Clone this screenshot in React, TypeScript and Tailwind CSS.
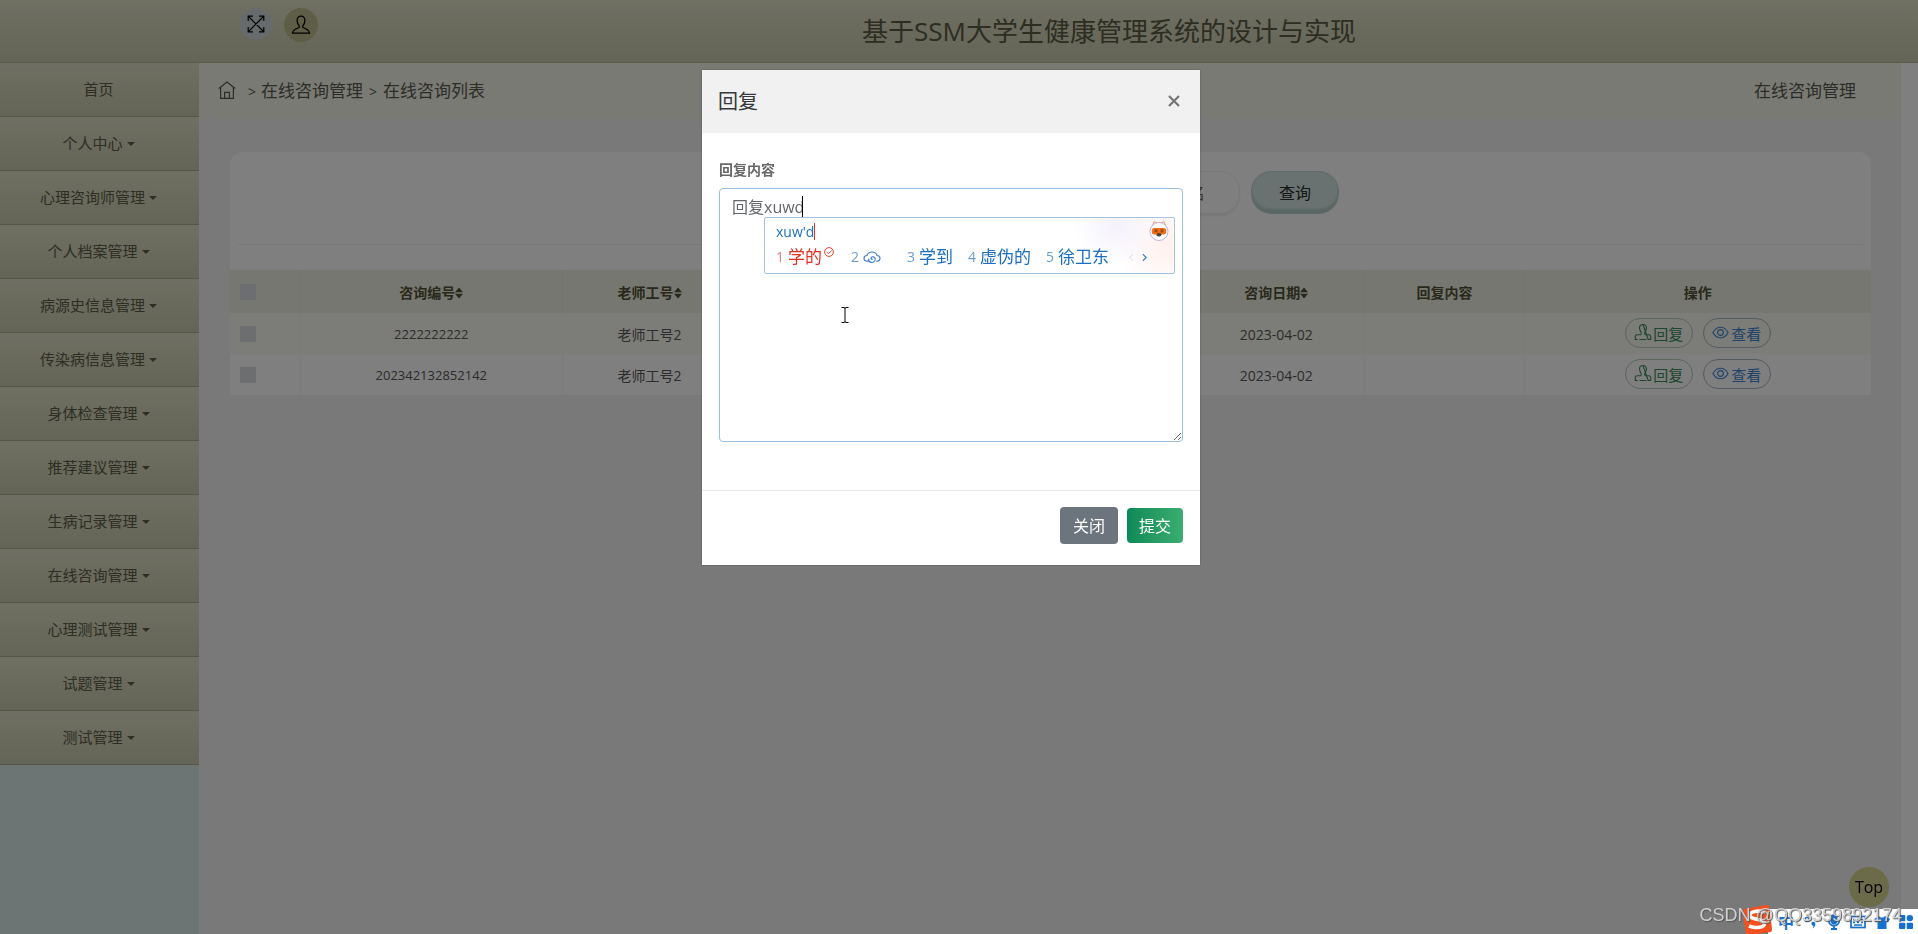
import React from "react";

const FONT = "font-['Open_Sans','Noto_Sans_CJK_SC',sans-serif]";

const MENU: { label: string; nested: boolean }[] = [
  { label: "首页", nested: false },
  { label: "个人中心", nested: true },
  { label: "心理咨询师管理", nested: true },
  { label: "个人档案管理", nested: true },
  { label: "病源史信息管理", nested: true },
  { label: "传染病信息管理", nested: true },
  { label: "身体检查管理", nested: true },
  { label: "推荐建议管理", nested: true },
  { label: "生病记录管理", nested: true },
  { label: "在线咨询管理", nested: true },
  { label: "心理测试管理", nested: true },
  { label: "试题管理", nested: true },
  { label: "测试管理", nested: true },
];

const ROWS = [
  { id: "2222222222", teacher: "老师工号2", date: "2023-04-02", shade: "bg-[#f8f8f3]" },
  { id: "202342132852142", teacher: "老师工号2", date: "2023-04-02", shade: "bg-[#fefefe]" },
];

function ExpandIcon() {
  return (
    <svg viewBox="0 0 18 18" className="size-[18px]" fill="none" stroke="#000" strokeWidth="1.2" aria-hidden="true">
      <path d="M1.5 1.5l15 15M16.5 1.5l-15 15M1.2 6V1.2H6M12 1.2h4.8V6M16.8 12v4.8H12M6 16.8H1.2V12" />
    </svg>
  );
}

function UserIcon() {
  return (
    <svg viewBox="0 0 20 20" className="size-5" fill="none" stroke="currentColor" strokeWidth="1.3" strokeLinejoin="round" aria-hidden="true">
      <path d="M10 1.2c-2.500 0-3.900 1.800-3.900 4.200 0 2.300.9 4.200 2.200 5.500.3 1-.1 1.700-1.300 2.100-2.800 1-5 2-5.600 5.200h17.200c-.6-3.200-2.800-4.200-5.600-5.200-1.200-.4-1.600-1.100-1.300-2.100 1.300-1.300 2.200-3.200 2.200-5.500 0-2.400-1.400-4.200-3.900-4.200z" />
    </svg>
  );
}

function StampIcon() {
  return (
    <svg viewBox="0 0 18 20" className="h-5 w-[18px]" fill="none" stroke="currentColor" strokeWidth="1.1" strokeLinejoin="round" aria-hidden="true">
      <path d="M9 1.500c-2.300 0-3.500 1.600-3.500 3.600 0 1.800.9 2.700 1.500 3.900.5 1 .3 2.300-.5 2.700H3.200c-1.200 0-1.900.8-1.900 1.900v2.900h2.500M14.200 16.500h2.500v-2.900c0-1.100-.7-1.900-1.900-1.900h-3.300c-.8-.4-1-1.700-.5-2.700.6-1.200 1.500-2.100 1.500-3.900 0-2-1.200-3.600-3.500-3.600zM5.500 16.500h7" />
    </svg>
  );
}

function EyeIcon() {
  return (
    <svg viewBox="0 0 18 18" className="size-[17px]" fill="none" stroke="currentColor" strokeWidth="1.2" aria-hidden="true">
      <path d="M1 9c1.800-3.500 4.600-5.600 8-5.600S15.200 5.500 17 9c-1.800 3.500-4.600 5.600-8 5.600S2.800 12.500 1 9z" />
      <circle cx="9" cy="9" r="3" />
    </svg>
  );
}

function HomeIcon() {
  return (
    <svg viewBox="0 0 18 18" className="size-[18px]" fill="none" stroke="currentColor" strokeWidth="1.2" aria-hidden="true">
      <path d="M.8 7.500L9 1l8.200 6.500M2.600 6.300v11h12.800v-11M6.600 17.300v-6h4.800v6" />
    </svg>
  );
}

function SortIcon() {
  return (
    <svg viewBox="0 0 8 12" className="h-3 w-2" fill="currentColor" aria-hidden="true">
      <path d="M4 .5L8 5.300H0zM4 11.500L0 6.700h8z" />
    </svg>
  );
}

function Header() {
  return (
    <header className="flex h-[63px] items-center border-b border-[#b4b592] bg-linear-to-b from-[#dfe0c6] to-[#c8c9ae]">
      <div className="flex w-[318px] shrink-0 justify-end gap-3 pb-3">
        <button type="button" aria-label="全屏" className="flex size-8 items-center justify-center rounded-full bg-[#d0d6da]">
          <ExpandIcon />
        </button>
        <button type="button" aria-label="个人信息" className="flex size-[34px] items-center justify-center rounded-full bg-[#bcbc8c] text-black">
          <UserIcon />
        </button>
      </div>
      <h1 className="flex-1 pr-[18px] text-center text-[26px] leading-8 text-[#5a5a42]">
        基于SSM大学生健康管理系统的设计与实现
      </h1>
    </header>
  );
}

function Sidebar() {
  return (
    <nav className="w-[199px] shrink-0 bg-[#d8eae8]">
      <ul>
        {MENU.map((item) => (
          <li key={item.label}>
            <a
              href="#"
              className="flex h-[54px] items-center justify-center gap-1 border-b border-[#a9aa88] bg-linear-to-b from-[#dfe0c6] to-[#c8c9ae] pr-[2px] text-[15px] text-[#5c5c46]"
            >
              {item.label}
              {item.nested && (
                <svg viewBox="0 0 8 4" className="h-1 w-2" fill="currentColor" aria-hidden="true">
                  <path d="M0 0h8L4 4z" />
                </svg>
              )}
            </a>
          </li>
        ))}
      </ul>
    </nav>
  );
}

function ConsultTable() {
  const head = "border-r border-[#e9e8de] pt-[2px] text-center text-[14px] font-bold";
  const cell = "border-r border-[#f4f4f0] pt-[2px] text-center";
  return (
    <table className="w-full table-fixed border-collapse text-[#585858]">
      <colgroup>
        <col className="w-[70px]" />
        <col className="w-[16%]" />
        <col className="w-[10.6%]" />
        <col className="w-[27.5%]" />
        <col className="w-[10.8%]" />
        <col className="w-[9.7%]" />
        <col />
      </colgroup>
      <thead>
        <tr className="h-[43px] bg-[#efefe4] text-[#525236]">
          <th className="border-r border-[#e9e8de] pl-[10px] text-left">
            <input type="checkbox" aria-label="全选" className="block size-4 appearance-none bg-[#dadce2]" />
          </th>
          <th className={head}><span className="inline-flex items-center">咨询编号<SortIcon /></span></th>
          <th className={head}><span className="inline-flex items-center">老师工号<SortIcon /></span></th>
          <th className={head} />
          <th className={head}><span className="inline-flex items-center">咨询日期<SortIcon /></span></th>
          <th className={head}>回复内容</th>
          <th className="pt-[2px] text-center text-[14px] font-bold">操作</th>
        </tr>
      </thead>
      <tbody>
        {ROWS.map((row) => (
          <tr key={row.id} className={`h-[41px] ${row.shade}`}>
            <td className="border-r border-[#f4f4f0] pl-[10px]">
              <input type="checkbox" aria-label={row.id} className="block size-4 appearance-none bg-[#dadce0]" />
            </td>
            <td className={`${cell} text-[13px]`}>{row.id}</td>
            <td className={`${cell} text-[14px]`}>{row.teacher}</td>
            <td className={cell} />
            <td className={`${cell} text-[14px]`}>{row.date}</td>
            <td className={cell} />
            <td>
              <div className="flex justify-center gap-[10px] pb-[2px]">
                <button type="button" className="flex h-[30px] w-[68px] items-center justify-center gap-px rounded-full border border-[#b4ccbc] text-[15px] leading-5 text-[#3a8c60]">
                  <StampIcon />
                  <span className="pt-[3px]">回复</span>
                </button>
                <button type="button" className="flex h-[30px] w-[68px] items-center justify-center gap-[2px] rounded-full border border-[#aab6c6] text-[15px] leading-5 text-[#3f86d0]">
                  <EyeIcon />
                  <span className="pt-[3px]">查看</span>
                </button>
              </div>
            </td>
          </tr>
        ))}
      </tbody>
    </table>
  );
}

function ImePanel() {
  const words = "text-[17px] text-[#1c6fc0]";
  const nums = "text-[14px] text-[#6c9ccb]";
  return (
    <div className="absolute top-[29px] left-[45px] h-[57px] w-[411px] rounded-[2px] border border-[#a5c3e0] bg-white bg-[radial-gradient(circle_at_86%_10%,#f4f1fb_0%,transparent_12%),radial-gradient(circle_at_98%_50%,#fff0ee_0%,transparent_12%)] px-[11px]">
      <div className="flex h-[26px] items-center justify-between">
        <span className="border-r border-[#e03020] text-[14px] leading-[17px] text-[#1c6fc0]">xuw'd</span>
        <svg viewBox="0 0 20 22" className="-mr-[6px] h-[22px] w-5" aria-hidden="true">
          <path d="M3.500 6l1.500-4.500 4 2h2l4-2L16.500 6" fill="#fff" stroke="#e88070" strokeWidth=".8" />
          <circle cx="10" cy="11.500" r="9" fill="#fff" stroke="#b8a0c8" strokeWidth=".8" />
          <rect x="2.800" y="8" width="14.400" height="6.500" rx="2.500" fill="#f07018" />
          <rect x="5.500" y="9.300" width="3" height="3" fill="#a04a10" />
          <rect x="11.500" y="9.300" width="3" height="3" fill="#a04a10" />
          <ellipse cx="10" cy="14.800" rx="2.600" ry="1.800" fill="#444" />
        </svg>
      </div>
      <ol className="flex items-center leading-[26px] whitespace-nowrap">
        <li className="flex w-[75px] items-center gap-1">
          <span className="text-[14px] text-[#e08078]">1</span>
          <span className="text-[17px] text-[#e03020]">学的</span>
          <svg viewBox="0 0 10 10" className="-ml-[2px] mb-[10px] size-[10px]" fill="none" stroke="#e03020" strokeWidth=".9" aria-hidden="true">
            <circle cx="5" cy="5" r="4.400" />
            <path d="M2.800 5l1.700 1.700 3-3.200" />
          </svg>
        </li>
        <li className="flex w-14 items-center gap-1">
          <span className={nums}>2</span>
          <svg viewBox="0 0 18 13" className="h-[13px] w-[18px]" fill="none" stroke="#3f80c8" strokeWidth="1.200" strokeLinecap="round" aria-hidden="true">
            <path d="M5.500 10.200H4.300C2.300 10.200 1 9 1 7.300c0-1.600 1.200-2.700 2.900-2.800C4.700 2.300 6.600 1 9 1s4.300 1.300 5.100 3.500c1.700.1 2.900 1.200 2.900 2.800 0 1.700-1.300 2.900-3.300 2.900" />
            <path d="M9.300 8.200c-1 .5-1.900-.8-1-1.800 1.200-1.300 3.700-.5 3.900 1.500.2 2.300-2 3.900-4.200 3.400-1.600-.4-2.500-1.700-2.300-3.300" />
          </svg>
        </li>
        <li className="flex w-[61px] items-center gap-1"><span className={nums}>3</span><span className={words}>学到</span></li>
        <li className="flex w-[78px] items-center gap-1"><span className={nums}>4</span><span className={words}>虚伪的</span></li>
        <li className="flex w-[83px] items-center gap-1"><span className={nums}>5</span><span className={words}>徐卫东</span></li>
        <li className="flex items-center gap-2">
          <svg viewBox="0 0 6 10" className="h-[9px] w-[5px]" fill="none" stroke="#c8d6e6" aria-hidden="true"><path d="M5 1L1 5l4 4" /></svg>
          <svg viewBox="0 0 6 10" className="h-[9px] w-[5px]" fill="none" stroke="#2f78c4" strokeWidth="1.400" aria-hidden="true"><path d="M1 1l4 4-4 4" /></svg>
        </li>
      </ol>
    </div>
  );
}

function ReplyDialog() {
  return (
    <div role="dialog" aria-labelledby="reply-title" className="w-[498px] bg-white shadow-[0_0_2px_rgba(0,0,0,0.3)]">
      <div className="flex h-[63px] items-center justify-between bg-[#f1f1f1] px-4">
        <h2 id="reply-title" className="pt-px text-[20px] text-[#35383c]">回复</h2>
        <button type="button" aria-label="关闭对话框" className="mr-1 mb-[2px] text-[#757575]">
          <svg viewBox="0 0 12 12" className="size-3" fill="none" stroke="currentColor" strokeWidth="2.200" aria-hidden="true">
            <path d="M1 1l10 10M11 1L1 11" />
          </svg>
        </button>
      </div>
      <div className="flex flex-col px-[17px] pt-[27px] pb-12">
        <label htmlFor="reply" className="mb-2 text-[14px] leading-5 font-bold text-[#686868]">回复内容</label>
        <div className="relative">
          <textarea
            id="reply"
            defaultValue="回复xuwd"
            className="block h-[254px] w-full resize rounded-[4px] border border-[#9dbfdf] px-3 py-[6px] text-[16px] leading-6 text-[#62666b] outline-none"
          />
          <span className="absolute top-2 left-[83px] h-[21px] w-px bg-black" />
          <ImePanel />
          <svg viewBox="0 0 8 16" className="absolute top-[119px] left-[122px] h-4 w-2" fill="none" stroke="#000" aria-hidden="true">
            <path d="M.5.500h2.500l1 .7 1-.7h2.500M4 1v14M.5 15.500h2.500l1-.7 1 .7h2.500" />
          </svg>
        </div>
      </div>
      <div className="flex h-[75px] items-start justify-end gap-[9px] border-t border-[#e9ecef] px-[17px] pt-4">
        <button type="button" className="h-[37px] w-[58px] rounded-[4px] bg-[#6c757d] text-[16px] text-white">关闭</button>
        <button type="button" className="mt-px h-[35px] w-14 rounded-[4px] bg-linear-to-r from-[#0a8a58] to-[#3aae70] text-[16px] text-white">提交</button>
      </div>
    </div>
  );
}

function InputTray() {
  const slot = "flex w-6 items-center justify-center";
  return (
    <div className="fixed right-0 bottom-0 flex h-[25px] bg-white pl-[6px]">
      <svg viewBox="0 0 30 30" className="absolute bottom-0 left-[-26px] size-[30px]" aria-hidden="true">
        <path d="M3 5L24 1c2-.3 3 .5 3.300 2.300L30 25c.2 1.800-.6 3-2.500 3.300L7 31c-1.800.2-2.800-.6-3.200-2.300L.6 8C.4 6.300 1.200 5.300 3 5z" fill="#f4511e" />
        <path d="M23 8.500C15 5.500 7 8 8 12s14 2.500 14.500 7S14 25 7 21.800" fill="none" stroke="#fff" strokeWidth="3.600" />
      </svg>
      <span className={`${slot} text-[16px] leading-5 font-bold text-[#1670d0]`}>中</span>
      <span className={slot}>
        <svg viewBox="0 0 14 16" className="h-4 w-[14px]" fill="#1670d0" aria-hidden="true">
          <circle cx="4" cy="5.500" r="2" fill="none" stroke="#1670d0" strokeWidth="1.400" />
          <path d="M9 8c2-.8 3.800.5 3.300 2.700-.3 1.800-1.500 3.100-3 3.800.8-1 1.200-1.800 1.100-2.700-1.400.2-2.700-2.700-1.400-3.800z" />
        </svg>
      </span>
      <span className={slot}>
        <svg viewBox="0 0 14 16" className="h-4 w-[14px]" fill="none" stroke="#1670d0" strokeWidth="1.800" aria-hidden="true">
          <rect x="4.500" y="1" width="5" height="8.500" rx="2.500" fill="#1670d0" />
          <path d="M1.800 6.500c0 7 10.400 7 10.400 0M7 12v3M4 15h6" />
        </svg>
      </span>
      <span className={slot}>
        <svg viewBox="0 0 16 14" className="h-[14px] w-4" fill="none" stroke="#1670d0" strokeWidth="1.700" aria-hidden="true">
          <rect x="1" y="1.500" width="14" height="11" />
          <path d="M3 4.700h2M7 4.700h2M11 4.700h2M3 7.300h2M7 7.300h2M11 7.300h2M4 10h8" />
        </svg>
      </span>
      <span className={slot}>
        <svg viewBox="0 0 16 14" className="h-[14px] w-4" fill="#1670d0" aria-hidden="true">
          <path d="M5 1c1.500 2 4.500 2 6 0l5 3-2 3.500-1.500-.8V14h-9V6.700L2 7.500 0 4z" />
        </svg>
      </span>
      <span className={slot}>
        <svg viewBox="0 0 14 14" className="size-[14px]" fill="#1670d0" aria-hidden="true">
          <rect width="6.300" height="6.300" rx="1" />
          <rect x="7.700" width="6.300" height="6.300" rx="3" />
          <rect y="7.700" width="6.300" height="6.300" rx="1" />
          <rect x="7.700" y="7.700" width="6.300" height="6.300" rx="1" />
        </svg>
      </span>
      <span className="absolute right-4 bottom-[7px] font-['Liberation_Sans',sans-serif] text-[18px] leading-6 whitespace-nowrap text-[#d0d0d0] [text-shadow:1px_1px_1px_#555]">
        CSDN @QQ3359892174
      </span>
    </div>
  );
}

export default function App() {
  return (
    <div className={`flex min-h-screen flex-col bg-white ${FONT}`}>
      <Header />
      <div className="flex flex-1">
        <Sidebar />
        <main className="mr-[17px] min-w-0 flex-1 bg-[#f2f2f3]">
          <div className="flex h-14 items-center justify-between bg-[#f5f5ea] pr-[45px] pl-[19px] text-[17px] text-[#5a5a50]">
            <div className="flex items-center">
              <a href="#" aria-label="主页" className="mr-3 mb-[2px]"><HomeIcon /></a>
              <span className="mr-[5px] text-[14px]">&gt;</span>
              <a href="#">在线咨询管理</a>
              <span className="mx-[6px] text-[14px]">&gt;</span>
              <span>在线咨询列表</span>
            </div>
            <span>在线咨询管理</span>
          </div>
          <section className="mt-[33px] mr-[30px] ml-[31px] overflow-hidden rounded-t-[12px] bg-white">
            <div className="mx-2 flex h-[93px] justify-end gap-[11px] border-b border-[#f0f0f0] pt-[19px] pr-[524px]">
              <input
                type="text"
                aria-label="老师姓名"
                placeholder="老师姓名"
                className="h-[43px] w-[180px] rounded-[20px] border border-[#efefef] pr-[34px] text-right text-[16px] shadow-[0_2px_2px_#eeeeee] placeholder:text-[#666]"
              />
              <button type="button" className="h-[43px] w-[88px] rounded-[20px] border border-[#bfd3ce] bg-[#d2e4e0] text-[16px] text-[#2c2c2c] shadow-[inset_0_-4px_2px_#b3ccc6]">
                查询
              </button>
            </div>
            <div className="h-[25px]" />
            <ConsultTable />
          </section>
        </main>
      </div>
      <div className="fixed inset-0 flex items-start justify-center bg-black/50 pt-[70px] pr-4">
        <ReplyDialog />
      </div>
      <button type="button" className="fixed right-[29px] bottom-[27px] size-10 rounded-full bg-[#6b6b4a] text-[16px] text-black">Top</button>
      <InputTray />
    </div>
  );
}
